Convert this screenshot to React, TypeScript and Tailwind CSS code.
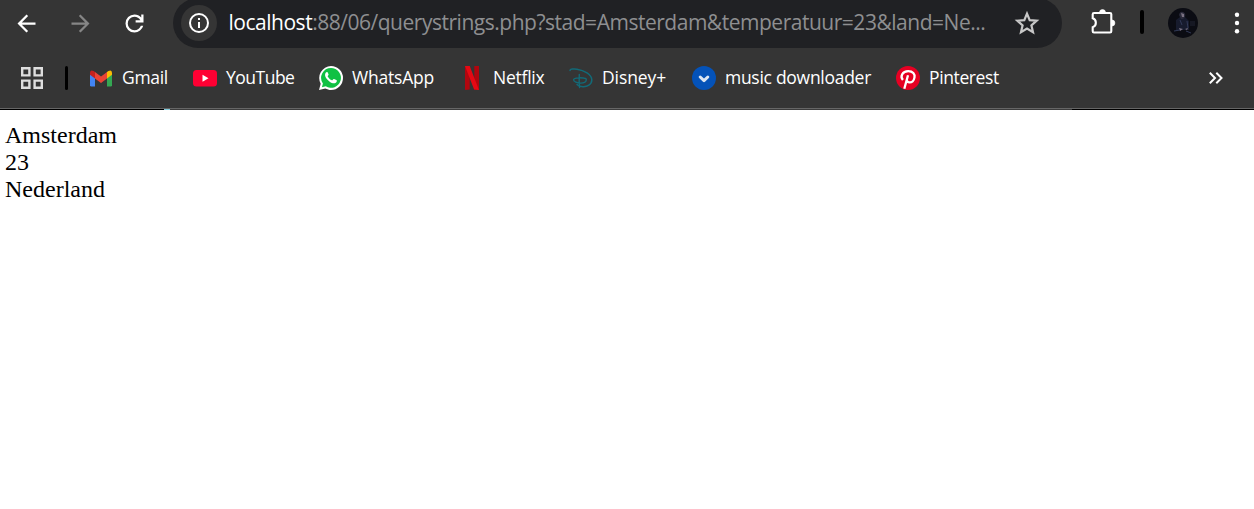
import type { ReactNode } from 'react';

const label = 'whitespace-nowrap text-white leading-6 -mt-0.5';

function Bookmark({ icon, text, width, tracking }: { icon: ReactNode; text: string; width: string; tracking: string }) {
  return (
    <a className={`flex shrink-0 items-center gap-[9px] ${width}`}>
      <span className="flex h-6 w-6 shrink-0 items-center justify-center">{icon}</span>
      <span className={`${label} ${tracking}`}>{text}</span>
    </a>
  );
}

const Gmail = () => (
  <svg width="22" height="17" viewBox="0 0 22 17">
    <path d="M0 4v11.2Q0 16.5 1.4 16.5H5V7z" fill="#4285f4" />
    <path d="M17 7v9.500h3.600q1.400 0 1.400-1.300V4z" fill="#34a853" />
    <path d="M5 2v6.500l6 4.500 6-4.500V2l-6 4.500z" fill="#ea4335" />
    <path d="M0 3v1.800l5 3.700V2L3.600 1Q0-.8 0 3z" fill="#c5221f" />
    <path d="M22 3v1.800l-5 3.700V2l1.400-1Q22-.8 22 3z" fill="#fbbc04" />
  </svg>
);

const YouTube = () => (
  <svg width="24" height="17" viewBox="0 0 24 17">
    <rect width="24" height="16.500" rx="3.500" fill="#ff0033" />
    <path d="M9.500 4.800v7l6-3.500z" fill="#fff" />
  </svg>
);

const WhatsApp = () => (
  <svg width="24" height="24" viewBox="0 0 24 24">
    <path d="M12 0a12 12 0 0 1 0 24c-2 0-4-.6-5.700-1.500L0 24l1.700-6.200A12 12 0 0 1 12 0z" fill="#fff" />
    <path d="M12 2a9.900 9.900 0 1 1-5.200 18.300L2.900 21.300l1-3.800A9.900 9.900 0 0 1 12 2z" fill="#10c143" />
    <path d="M8.700 6.500c-.5-.8-1.300-.5-1.800.1C4.400 9.600 8 13.700 10.700 15.800c2.600 1.800 5.600 2.300 6.800.2.600-1.200.4-1.600-.2-1.900l-2.200-1c-.6-.3-.8 0-1.300.7-.5.600-.7.700-1.400.3-1.800-.9-2.800-2-3.700-3.600-.2-.5.600-1 .9-1.700.1-.5-.6-1.700-.9-2.300z" fill="#fff" />
  </svg>
);

const Netflix = () => (
  <svg width="14" height="24" viewBox="0 0 14 24">
    <path d="M0 0h4.700v23.500L0 24zM9.300 0H14v24l-4.700-.5z" fill="#b1060f" />
    <path d="M0 0h4.700L14 24q-2.400-.5-4.900-.5z" fill="#e50914" />
  </svg>
);

const Disney = () => (
  <svg width="24" height="24" viewBox="0 0 24 24" fill="none" stroke="#126a78" strokeLinecap="round">
    <path d="M1 4.500C1 3 4.500 2.700 8 3.200c7 1 14.800 5.500 14.800 10.800 0 4.500-4.800 7-9 6.700-2.800-.1-4.700-.9-5.800-2.200" strokeWidth="1.500" />
    <path d="M10.300 8.500c-.3 4.300-.2 8.500.3 13M16.800 12.600c-3-1.100-12-1.300-12.200 1-.2 2.200 3.600 3.600 7 3.500 3.200 0 5.600-1.200 5.700-3.300 0-.6-.2-1-.5-1.200" strokeWidth="1.400" />
  </svg>
);

const Downloader = () => (
  <svg width="24" height="24" viewBox="0 0 24 24">
    <circle cx="12" cy="12" r="12" fill="#0452b8" />
    <path d="M8.200 11l3.800 3.600L15.800 11" fill="none" stroke="#dbe5f2" strokeWidth="3" strokeLinecap="round" strokeLinejoin="round" />
  </svg>
);

const Pinterest = () => (
  <svg width="24" height="24" viewBox="0 0 24 24">
    <circle cx="12" cy="12" r="12" fill="#e60023" />
    <path d="M12 9.200L8.300 22.800M6.900 14C3.900 10.500 6.300 5.100 12.300 5.100c4.500 0 6.800 3 6.200 6.300-.5 3.500-3 5.200-5 5-1.700-.2-2.500-1.200-2.700-2.200" fill="none" stroke="#fff" strokeWidth="2.300" />
  </svg>
);

function Toolbar() {
  return (
    <div className="flex h-12 items-start overflow-hidden">
      <div className="flex h-[46px] w-[173px] shrink-0 items-center fill-white pl-[12.500px]">
        <svg width="27" height="27" viewBox="0 0 24 24">
          <path d="M7.825 13L13.425 18.6L12 20L4 12L12 4L13.425 5.4L7.825 11H20V13Z" />
        </svg>
        <svg className="ml-[27px] fill-[#868686]" width="27" height="27" viewBox="0 0 24 24">
          <path d="M16.175 13H4V11H16.175L10.575 5.400L12 4L20 12L12 20L10.575 18.600Z" />
        </svg>
        <svg className="ml-[27px]" width="27" height="27" viewBox="0 0 24 24">
          <path d="M12 20q-3.350 0-5.675-2.325T4 12t2.325-5.675T12 4q1.725 0 3.300.712T18 6.750V4h2v7h-7V9h4.200q-.8-1.400-2.187-2.200T12 6Q9.500 6 7.750 7.750T6 12t1.750 4.250T12 18q1.925 0 3.475-1.100T17.650 14h2.100q-.7 2.650-2.850 4.325T12 20" />
        </svg>
      </div>
      <div className="-mt-[2px] flex h-[50px] w-[889px] shrink-0 items-center rounded-full bg-[#202124] pl-2">
        <div className="flex h-9 w-9 shrink-0 items-center justify-center rounded-full bg-[#353535]">
          <svg width="20" height="20" viewBox="0 0 20 20">
            <circle cx="10" cy="10" r="9" fill="none" stroke="#fff" strokeWidth="2" />
            <path d="M9 5h2v2H9zM9 9h2v6H9z" fill="#fff" />
          </svg>
        </div>
        <div className="-mt-0.5 ml-[11.500px] w-[780.500px] whitespace-nowrap text-[21px] leading-7 tracking-[-0.480px] text-[#8e8f91]">
          <span className="text-white">localhost</span>:88/06/querystrings.php?stad=Amsterdam&amp;temperatuur=23&amp;land=Ne...
        </div>
        <svg className="ml-[4px] shrink-0" width="28" height="28" viewBox="0 0 28 28">
          <path d="M14 4.600l2.700 6.500 7 .6-5.300 4.600 1.600 6.800-6-3.600-6 3.600 1.600-6.800-5.300-4.600 7-.6z" fill="none" stroke="#c7c7c7" strokeWidth="2.200" />
        </svg>
      </div>
      <div className="flex h-[46px] items-center">
        <svg className="-mt-[1px] ml-[28px]" width="27" height="27" viewBox="0 0 27 27">
          <path d="M4 4H20q1.300 0 1.300 1.300v16.900q0 1.300-1.300 1.300H4q-1.300 0-1.300-1.300v-4c4.200-1.400 4.200-7.500 0-8.900v-4q0-1.300 1.300-1.300z" fill="none" stroke="#fff" strokeWidth="2.100" />
          <path d="M9.500 3.500a3 2.900 0 0 1 6 0zM22 11a2.900 3 0 0 1 0 6z" fill="#fff" stroke="#fff" strokeWidth=".6" />
        </svg>
        <div className="-mt-[2px] ml-[23px] h-6 w-[3.500px] rounded-full bg-black" />
        <svg className="ml-[24.500px]" width="30" height="30" viewBox="0 0 30 30">
          <defs>
            <clipPath id="face"><circle cx="15" cy="15" r="15" /></clipPath>
          </defs>
          <g clipPath="url(#face)">
            <rect width="30" height="30" fill="#0b0c13" />
            <path d="M8 22V12l4-3h5l4 4v9z" fill="#171b2d" />
            <path d="M11 7q1-4 4-3 3 1 2 5l-2 2h-2z" fill="#2a2a3a" />
            <path d="M13 5l3 1v3h-2zM11 20l4 1-3 2zM17 21l3-1-1 2z" fill="#7a7282" />
            <path d="M12 12l2 5m5-4l1 7M6 23l6-1m6 1l5 2" fill="none" stroke="#323a58" strokeWidth="1" />
            <path d="M22 13h5v5h-5z" fill="#161823" />
          </g>
        </svg>
        <svg className="ml-[36px]" width="6" height="24" viewBox="0 0 6 24" fill="#fff">
          <circle cx="3" cy="3.800" r="2.200" /><circle cx="3" cy="12" r="2.200" /><circle cx="3" cy="20.200" r="2.200" />
        </svg>
      </div>
    </div>
  );
}

export default function App() {
  return (
    <div className="flex h-[509px] w-[1254px] flex-col overflow-hidden bg-white">
      <header className="h-[108px] shrink-0 bg-[#353535] font-['Open_Sans','Noto_Sans',sans-serif]">
        <Toolbar />
        <nav className="flex h-[60px] items-center text-[17.500px]">
          <svg className="ml-[21px] shrink-0" width="22" height="22" viewBox="0 0 22 22" fill="none" stroke="#dedede" strokeWidth="2.400">
            <path d="M1.200 1.200h7.200v7.200H1.200zM13.600 1.200h7.200v7.200h-7.200zM1.200 13.600h7.200v7.200H1.200zM13.600 13.600h7.200v7.200h-7.200z" />
          </svg>
          <div className="ml-[22px] mr-[21px] h-6 w-[3px] shrink-0 rounded-full bg-black" />
          <Bookmark icon={<Gmail />} text="Gmail" width="w-[104px]" tracking="tracking-[-0.300px]" />
          <Bookmark icon={<YouTube />} text="YouTube" width="w-[126px]" tracking="tracking-[-0.500px]" />
          <Bookmark icon={<WhatsApp />} text="WhatsApp" width="w-[141px]" tracking="tracking-[-0.200px]" />
          <Bookmark icon={<Netflix />} text="Netflix" width="w-[109px]" tracking="tracking-[-0.250px]" />
          <Bookmark icon={<Disney />} text="Disney+" width="w-[123px]" tracking="tracking-[-0.100px]" />
          <Bookmark icon={<Downloader />} text="music downloader" width="w-[204px]" tracking="tracking-[-0.280px]" />
          <Bookmark icon={<Pinterest />} text="Pinterest" width="w-[313px]" tracking="tracking-[-0.380px]" />
          <svg width="14" height="12" viewBox="0 0 14 12" fill="none" stroke="#fff" strokeWidth="2">
            <path d="M.8.800L6 6 .8 11.200M7.300.800L12.500 6l-5.200 5.200" />
          </svg>
        </nav>
      </header>
      <div className="h-px shrink-0 bg-[#666666]" />
      <div className="flex h-px shrink-0 bg-black">
        <div className="ml-[164px] h-px w-[6px] bg-[#83cbdc]" />
        <div className="h-px w-[902px] bg-[#3c3c3c]" />
      </div>
      <main className="pl-[5px] pt-[12px] font-['Liberation_Serif',serif] text-[24px] leading-[27px] text-black">
        <p>Amsterdam</p>
        <p>23</p>
        <p>Nederland</p>
      </main>
    </div>
  );
}
